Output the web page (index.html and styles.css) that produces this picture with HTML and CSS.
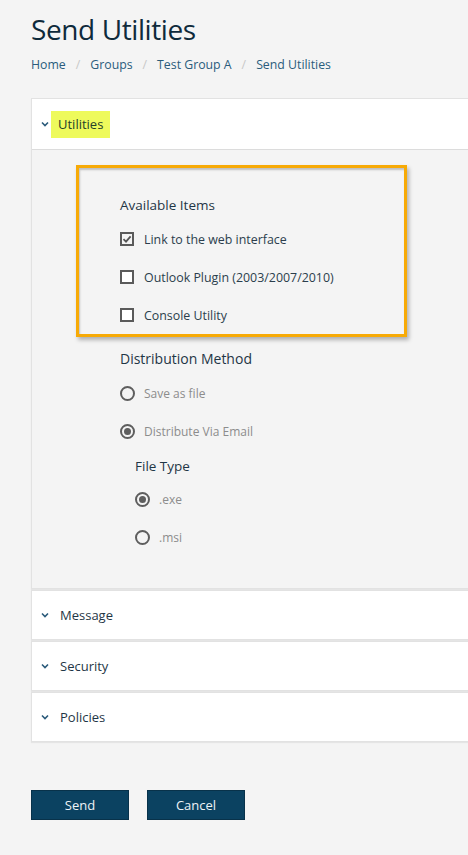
FILE: index.html
```html
<!DOCTYPE html>
<html lang="en">
<head>
<meta charset="utf-8">
<title>Send Utilities</title>
<link rel="stylesheet" href="styles.css">
</head>
<body>
<div class="page">
  <h1 class="title">Send Utilities</h1>
  <nav class="crumbs">
    <a class="crumb">Home</a><span class="sep">/</span>
    <a class="crumb">Groups</a><span class="sep">/</span>
    <a class="crumb">Test Group A</a><span class="sep">/</span>
    <a class="crumb">Send Utilities</a>
  </nav>

  <div class="accordion">
    <section class="panel open">
      <div class="panel-head">
        <svg class="chev" width="8" height="6" viewBox="0 0 8 6"><path d="M1 1.5 L4 4.5 L7 1.5" fill="none" stroke="#2a5a7a" stroke-width="1.6"/></svg>
        <span class="head-label hl">Utilities</span>
      </div>
      <div class="panel-body">
        <div class="callout">
          <div class="group-title">Available Items</div>
          <div class="opt">
            <span class="box checked"><svg width="10" height="10" viewBox="0 0 10 10"><path d="M1.5 5.2 L4 7.6 L8.6 2.4" fill="none" stroke="#555" stroke-width="1.8"/></svg></span>
            <span class="opt-label">Link to the web interface</span>
          </div>
          <div class="opt">
            <span class="box"></span>
            <span class="opt-label">Outlook Plugin (2003/2007/2010)</span>
          </div>
          <div class="opt">
            <span class="box"></span>
            <span class="opt-label">Console Utility</span>
          </div>
        </div>

        <div class="dist">
          <div class="group-title big">Distribution Method</div>
          <div class="opt radio-row">
            <span class="radio"></span>
            <span class="opt-label muted">Save as file</span>
          </div>
          <div class="opt radio-row">
            <span class="radio on"></span>
            <span class="opt-label muted">Distribute Via Email</span>
          </div>
          <div class="sub">
            <div class="group-title sub-title">File Type</div>
            <div class="opt radio-row">
              <span class="radio on"></span>
              <span class="opt-label muted">.exe</span>
            </div>
            <div class="opt radio-row">
              <span class="radio"></span>
              <span class="opt-label muted">.msi</span>
            </div>
          </div>
        </div>
      </div>
    </section>
    <section class="panel">
      <div class="panel-head">
        <svg class="chev" width="8" height="6" viewBox="0 0 8 6"><path d="M1 1.5 L4 4.5 L7 1.5" fill="none" stroke="#2a5a7a" stroke-width="1.6"/></svg>
        <span class="head-label">Message</span>
      </div>
    </section>
    <section class="panel">
      <div class="panel-head">
        <svg class="chev" width="8" height="6" viewBox="0 0 8 6"><path d="M1 1.5 L4 4.5 L7 1.5" fill="none" stroke="#2a5a7a" stroke-width="1.6"/></svg>
        <span class="head-label">Security</span>
      </div>
    </section>
    <section class="panel">
      <div class="panel-head">
        <svg class="chev" width="8" height="6" viewBox="0 0 8 6"><path d="M1 1.5 L4 4.5 L7 1.5" fill="none" stroke="#2a5a7a" stroke-width="1.6"/></svg>
        <span class="head-label">Policies</span>
      </div>
    </section>
  </div>

  <div class="actions">
    <button class="btn">Send</button>
    <button class="btn">Cancel</button>
  </div>
</div>
</body>
</html>
```

FILE: styles.css
```css
html, body {
  margin: 0;
  padding: 0;
  background: #f4f4f4;
  overflow-x: hidden;
}
body {
  font-family: "Open Sans", "Noto Sans", "Liberation Sans", sans-serif;
  color: #1f3646;
}
.page {
  padding: 9px 0 0 31px;
}
.title {
  margin: 0;
  font-size: 28px;
  font-weight: 400;
  line-height: 40px;
  color: #0e2a3b;
  letter-spacing: -0.4px;
}
.crumbs {
  display: flex;
  align-items: center;
  margin-top: 5px;
  height: 20px;
  font-size: 12.3px;
  color: #2a5c7c;
}
.crumb {
  color: #2a5c7c;
}
.sep {
  color: #c8c8c8;
  padding: 0 10px;
}
.accordion {
  margin-top: 24px;
  margin-right: -6px;
  display: flex;
  flex-direction: column;
  gap: 1px;
}
.panel {
  background: #fff;
  border: 1px solid #e2e2e2;
  box-shadow: 0 1px 1px rgba(0,0,0,0.06);
}
.panel-head {
  height: 48px;
  display: flex;
  align-items: center;
  padding-left: 9px;
  gap: 2px;
  background: #fff;
}
.panel.open .panel-head {
  height: 50px;
}
.chev {
  flex: none;
}
.head-label {
  font-size: 13px;
  color: #1f3646;
  padding-left: 9px;
}
.head-label.hl {
  background: #eefa5c;
  padding: 0 7px;
  height: 27px;
  line-height: 27px;
  color: #25402a;
}
.panel-body {
  background: #f4f4f4;
  border-top: 1px solid #dcdcdc;
  padding: 15px 0 32px 44px;
}
.callout {
  box-sizing: border-box;
  width: 331px;
  border: 3px solid #f7aa06;
  box-shadow: 2px 3px 4px rgba(0,0,0,0.28), inset 1px 2px 2px rgba(0,0,0,0.22);
  padding: 28px 0 0 41px;
  display: flex;
  flex-direction: column;
}
.group-title {
  font-size: 13.5px;
  line-height: 18px;
  color: #1f3646;
  margin-bottom: 6px;
}
.group-title.big {
  font-size: 14px;
}
.group-title.sub-title {
  margin-bottom: 5px;
}
.opt {
  display: flex;
  align-items: center;
  height: 38px;
  gap: 10px;
}
.opt-label {
  font-size: 12.4px;
  color: #2b3e4c;
}
.opt-label.muted {
  font-size: 12px;
  color: #8c8c8c;
}
.box {
  width: 10px;
  height: 10px;
  border: 2px solid #5a5a5a;
  display: flex;
  align-items: center;
  justify-content: center;
  flex: none;
  background: #fff;
}
.box.checked {
  background: #f4f4f4;
}
.dist {
  padding: 13px 0 0 44px;
}
.radio {
  width: 11px;
  height: 11px;
  border: 2px solid #5e5e5e;
  border-radius: 50%;
  flex: none;
  display: flex;
  align-items: center;
  justify-content: center;
}
.radio.on::after {
  content: "";
  width: 7px;
  height: 7px;
  border-radius: 50%;
  background: #5e5e5e;
}
.radio-row {
  gap: 9px;
}
.sub {
  padding: 7px 0 0 15px;
}
.actions {
  display: flex;
  gap: 18px;
  margin-top: 48px;
}
.btn {
  width: 98px;
  height: 30px;
  background: #0b4261;
  border: 1px solid #08324a;
  color: #eef3f6;
  font-family: inherit;
  font-size: 13px;
  padding: 0;
}
```
